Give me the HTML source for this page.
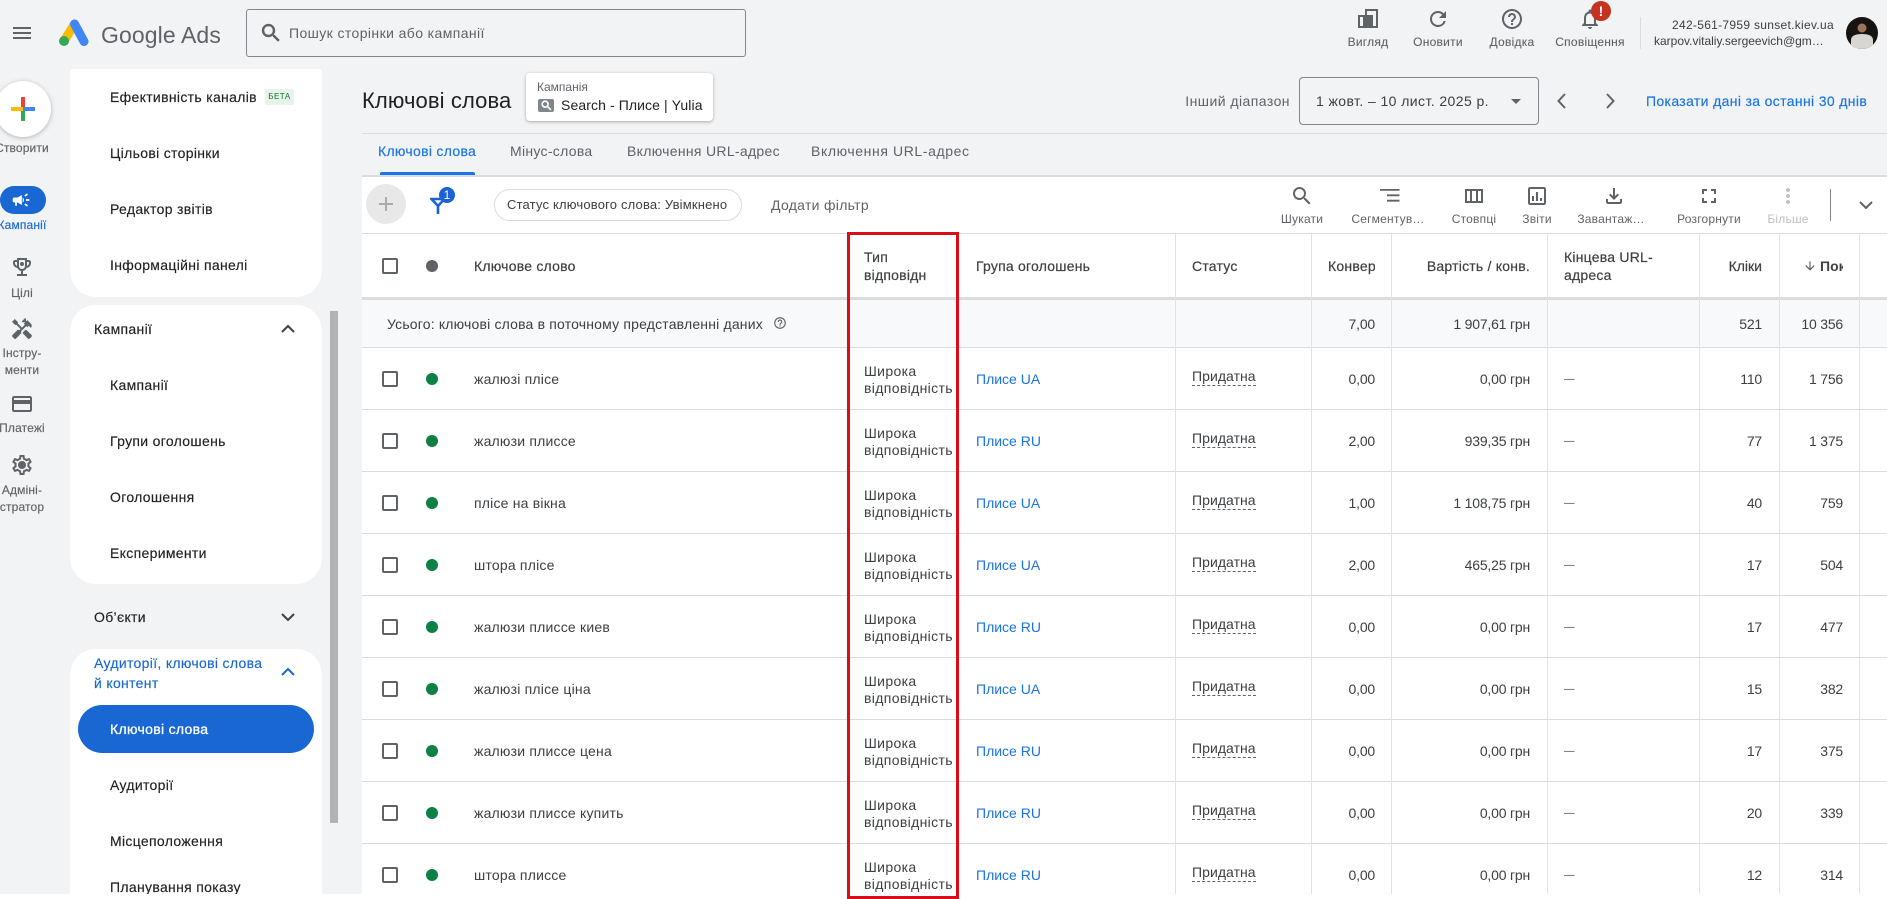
<!DOCTYPE html>
<html lang="uk"><head><meta charset="utf-8"><title>Google Ads</title>
<style>
html,body{margin:0;padding:0}
body{width:1887px;height:899px;overflow:hidden;position:relative;background:#f1f3f4;font:14px/20px "Liberation Sans","Noto Sans CJK JP",sans-serif;color:#3c4043}
.a{position:absolute;white-space:nowrap;line-height:20px}
svg{position:absolute;display:block}
.g{fill:#5f6368}
.s{font-size:14px;letter-spacing:.32px;color:#202124;-webkit-text-stroke:.15px #202124}
.r{font-size:12px;width:60px;left:-8px;text-align:center;line-height:17px;color:#5f6368;white-space:normal;letter-spacing:.15px;-webkit-text-stroke:.15px #5f6368}
.l{font-size:12px;text-align:center;color:#5f6368;transform:translateX(-50%);top:209px;letter-spacing:.2px}
.tl{font-size:12px;text-align:center;color:#5f6368;transform:translateX(-50%);top:32px;letter-spacing:.25px;-webkit-text-stroke:.1px #5f6368}
.tab{top:141px;font-size:14px;color:#5f6368;letter-spacing:.3px}
.row{position:absolute;left:362px;width:1525px;height:61px;background:#fff;border-bottom:1px solid #dadce0}
.row .a{color:#3c4043}
.cb{position:absolute;left:20px;top:23px;width:12px;height:12px;border:2px solid #5f6368;border-radius:2px}
.dot{position:absolute;left:64px;top:25px;width:12px;height:12px;border-radius:50%;background:#0d8043}
.k{left:112px;top:21px;letter-spacing:.2px}
.m{left:502px;top:15px;line-height:17px!important;letter-spacing:.35px}
.ag{left:614px;top:21px;color:#1a73e8!important;letter-spacing:0}
.st{left:830px;top:20px;letter-spacing:.05px;border-bottom:1px dashed #5f6368;line-height:16px!important;padding-bottom:1px}
.n1,.n2,.n3,.n4{top:21px;text-align:right;letter-spacing:-.2px}
.n1{right:512px}.n2{right:357px}.n3{right:125px}.n4{right:44px}
.u{left:1202px;top:21px;font-size:10.5px}
.h{font-size:14px;color:#3c4043;-webkit-text-stroke:.2px #3c4043;letter-spacing:.22px}
.v{position:absolute;top:233px;width:1px;height:661px;background:#e0e2e5}
</style></head>
<body>

<!-- top bar -->
<svg style="left:10px;top:21px" width="24" height="24" viewBox="0 0 24 24"><path class="g" d="M3 18h18v-2H3v2zm0-5h18v-2H3v2zm0-7v2h18V6H3z"/></svg>
<svg style="left:59px;top:19px" width="30" height="27" viewBox="0 0 30 27"><path d="M15.5 5 L5 22" stroke="#fbbc04" stroke-width="9"/><path d="M15.5 5 L25 22.5" stroke="#4285f4" stroke-width="9" stroke-linecap="round"/><circle cx="5" cy="22" r="5" fill="#34a853"/></svg>
<div class="a" style="left:101px;top:23px;font-size:23px;line-height:24px;color:#5f6368;letter-spacing:.1px">Google Ads</div>
<div style="position:absolute;left:246px;top:9px;width:498px;height:46px;border:1px solid #80868b;border-radius:3px"></div>
<svg style="left:259px;top:21px" width="24" height="24" viewBox="0 0 24 24"><path class="g" stroke="#5f6368" stroke-width=".5" d="M15.5 14h-.79l-.28-.27A6.471 6.471 0 0 0 16 9.5 6.5 6.5 0 1 0 9.5 16c1.61 0 3.09-.59 4.23-1.57l.27.28v.79l5 4.99L20.49 19l-4.99-5zm-6 0C7.01 14 5 11.99 5 9.5S7.01 5 9.5 5 14 7.01 14 9.5 11.99 14 9.5 14z"/></svg>
<div class="a" style="left:289px;top:23px;color:#5f6368;font-size:14px;letter-spacing:.4px">Пошук сторінки або кампанії</div>

<!-- top right -->
<svg style="left:1358px;top:9px" width="20" height="19" viewBox="0 0 20 19"><path class="g" d="M7 0h13v19H0V6h7V0zm2 2v15h9V2H9zM2 8v9h3V8H2z"/><rect x="7" y="6" width="8" height="11" fill="#5f6368"/></svg>
<svg style="left:1426px;top:7px" width="24" height="24" viewBox="0 0 24 24"><path class="g" d="M17.65 6.35A7.958 7.958 0 0 0 12 4c-4.42 0-7.99 3.58-7.99 8s3.57 8 7.99 8c3.73 0 6.84-2.55 7.73-6h-2.08A5.99 5.99 0 0 1 12 18c-3.31 0-6-2.69-6-6s2.69-6 6-6c1.66 0 3.14.69 4.22 1.78L13 11h7V4l-2.35 2.35z"/></svg>
<svg style="left:1500px;top:7px" width="24" height="24" viewBox="0 0 24 24"><path class="g" d="M11 18h2v-2h-2v2zm1-16C6.48 2 2 6.48 2 12s4.48 10 10 10 10-4.48 10-10S17.52 2 12 2zm0 18c-4.41 0-8-3.59-8-8s3.59-8 8-8 8 3.59 8 8-3.59 8-8 8zm0-14c-2.21 0-4 1.79-4 4h2c0-1.1.9-2 2-2s2 .9 2 2c0 2-3 1.75-3 5h2c0-2.25 3-2.5 3-5 0-2.21-1.79-4-4-4z"/></svg>
<svg style="left:1578px;top:7px" width="24" height="24" viewBox="0 0 24 24"><path class="g" d="M12 22c1.1 0 2-.9 2-2h-4c0 1.1.9 2 2 2zm6-6v-5c0-3.07-1.63-5.64-4.5-6.32V4c0-.83-.67-1.5-1.5-1.5s-1.5.67-1.5 1.5v.68C7.64 5.36 6 7.92 6 11v5l-2 2v1h16v-1l-2-2zm-2 1H8v-6c0-2.48 1.51-4.5 4-4.5s4 2.02 4 4.5v6z"/></svg>
<div style="position:absolute;left:1591px;top:1px;width:20px;height:20px;border-radius:50%;background:#c5321f"></div>
<div class="a" style="left:1591px;top:1px;width:20px;text-align:center;color:#fff;font-weight:700;font-size:14px">!</div>
<div class="a tl" style="left:1368px">Вигляд</div>
<div class="a tl" style="left:1438px">Оновити</div>
<div class="a tl" style="left:1512px">Довідка</div>
<div class="a tl" style="left:1590px">Сповіщення</div>
<div style="position:absolute;left:1640px;top:17px;width:1px;height:32px;background:#dadce0"></div>
<div class="a" style="right:53px;top:15px;font-size:12px;color:#3c4043;letter-spacing:.3px">242-561-7959 sunset.kiev.ua</div>
<div class="a" style="left:1654px;top:31px;font-size:12px;color:#3c4043;width:175px;overflow:hidden">karpov.vitaliy.sergeevich@gm…</div>
<svg style="left:1846px;top:17px" width="32" height="32" viewBox="0 0 32 32"><defs><clipPath id="c"><circle cx="16" cy="16" r="16"/></clipPath></defs><g clip-path="url(#c)"><rect width="32" height="32" fill="#171310"/><circle cx="16" cy="11" r="4.5" fill="#9c7358"/><path d="M5 32v-9c0-4 4-6 11-6s11 2 11 6v9z" fill="#d8d6d2"/></g></svg>

<!-- left rail -->
<div style="position:absolute;left:-5px;top:81px;width:56px;height:56px;border-radius:50%;background:#fff;box-shadow:0 1px 5px rgba(60,64,67,.35)"></div>
<div style="position:absolute;left:21px;top:97px;width:4px;height:12px;background:#ea4335"></div>
<div style="position:absolute;left:21px;top:109px;width:4px;height:12px;background:#34a853"></div>
<div style="position:absolute;left:11px;top:107px;width:12px;height:4px;background:#fbbc04"></div>
<div style="position:absolute;left:23px;top:107px;width:12px;height:4px;background:#4285f4"></div>
<div class="a r" style="top:140px">Створити</div>
<div style="position:absolute;left:0;top:186px;width:46px;height:28px;border-radius:14px;background:#1967d2"></div>
<svg style="left:11px;top:190px" width="20" height="20" viewBox="0 0 24 24"><path fill="#fff" d="M18 11v2h4v-2h-4zm-2 6.61c.96.71 2.21 1.65 3.2 2.39.4-.53.8-1.07 1.2-1.6-.99-.74-2.24-1.68-3.2-2.4-.4.54-.8 1.08-1.2 1.61zM20.4 5.6c-.4-.53-.8-1.07-1.2-1.6-.99.74-2.24 1.68-3.2 2.4.4.53.8 1.07 1.2 1.6.96-.72 2.21-1.65 3.2-2.4zM4 9c-1.1 0-2 .9-2 2v2c0 1.1.9 2 2 2h1v4h2v-4h1l5 3V6L8 9H4zm11.5 3c0-1.33-.58-2.53-1.5-3.35v6.69c.92-.81 1.5-2.01 1.5-3.34z"/></svg>
<div class="a r" style="top:217px;color:#1967d2;-webkit-text-stroke:.15px #1967d2">Кампанії</div>
<svg style="left:10px;top:255px" width="24" height="24" viewBox="0 0 24 24"><path class="g" d="M19 5h-2V3H7v2H5c-1.1 0-2 .9-2 2v1c0 2.55 1.92 4.63 4.39 4.94.63 1.5 1.98 2.63 3.61 2.96V19H7v2h10v-2h-4v-3.1c1.63-.33 2.98-1.46 3.61-2.96C19.08 12.63 21 10.55 21 8V7c0-1.1-.9-2-2-2zM5 8V7h2v3.82C5.84 10.4 5 9.3 5 8zm7 6c-1.65 0-3-1.35-3-3V5h6v6c0 1.65-1.35 3-3 3zm7-6c0 1.3-.84 2.4-2 2.82V7h2v1z"/><circle class="g" cx="12" cy="9" r="2"/></svg>
<div class="a r" style="top:285px">Цілі</div>
<svg style="left:10px;top:317px" width="24" height="24" viewBox="0 0 24 24"><path class="g" d="M21.67 18.17l-5.3-5.3h-.99l-2.54 2.54v.99l5.3 5.3c.39.39 1.02.39 1.41 0l2.12-2.12c.39-.38.39-1.02 0-1.41z"/><path class="g" d="M17.34 10.19l1.41-1.41 2.12 2.12c1.17-1.17 1.17-3.07 0-4.24l-3.54-3.54-1.41 1.41V1.71l-.7-.71-3.54 3.54.71.71h2.83l-1.41 1.41 1.06 1.06-2.89 2.89-4.13-4.13V5.06L4.83 2.04 2 4.87 5.03 7.9h1.41l4.13 4.13-.85.85H7.61l-5.3 5.3c-.39.39-.39 1.02 0 1.41l2.12 2.12c.39.39 1.02.39 1.41 0l5.3-5.3v-2.12l5.15-5.15 1.05 1.05z"/></svg>
<div class="a r" style="top:345px">Інстру-<br>менти</div>
<svg style="left:10px;top:392px" width="24" height="24" viewBox="0 0 24 24"><path class="g" d="M20 4H4c-1.11 0-1.99.89-1.99 2L2 18c0 1.11.89 2 2 2h16c1.11 0 2-.89 2-2V6c0-1.11-.89-2-2-2zm0 14H4v-6h16v6zm0-10H4V6h16v2z"/></svg>
<div class="a r" style="top:420px">Платежі</div>
<svg style="left:10px;top:453px" width="24" height="24" viewBox="0 0 24 24"><path class="g" d="M19.43 12.98c.04-.32.07-.64.07-.98 0-.34-.03-.66-.07-.98l2.11-1.65c.19-.15.24-.42.12-.64l-2-3.46c-.09-.16-.26-.25-.44-.25-.06 0-.12.01-.17.03l-2.49 1c-.52-.4-1.08-.73-1.69-.98l-.38-2.65C14.46 2.18 14.25 2 14 2h-4c-.25 0-.46.18-.49.42l-.38 2.65c-.61.25-1.17.59-1.69.98l-2.49-1c-.06-.02-.12-.03-.18-.03-.17 0-.34.09-.43.25l-2 3.46c-.13.22-.07.49.12.64l2.11 1.65c-.04.32-.07.65-.07.98 0 .33.03.66.07.98l-2.11 1.65c-.19.15-.24.42-.12.64l2 3.46c.09.16.26.25.44.25.06 0 .12-.01.17-.03l2.49-1c.52.4 1.08.73 1.69.98l.38 2.65c.03.24.24.42.49.42h4c.25 0 .46-.18.49-.42l.38-2.65c.61-.25 1.17-.59 1.69-.98l2.49 1c.06.02.12.03.18.03.17 0 .34-.09.43-.25l2-3.46c.12-.22.07-.49-.12-.64l-2.11-1.65zm-1.98-1.71c.04.31.05.52.05.73 0 .21-.02.43-.05.73l-.14 1.13.89.7 1.08.84-.7 1.21-1.27-.51-1.04-.42-.9.68c-.43.32-.84.56-1.25.73l-1.06.43-.16 1.13-.2 1.35h-1.4l-.19-1.35-.16-1.13-1.06-.43c-.43-.18-.83-.41-1.23-.71l-.91-.7-1.06.43-1.27.51-.7-1.21 1.08-.84.89-.7-.14-1.13c-.03-.31-.05-.54-.05-.74s.02-.43.05-.73l.14-1.13-.89-.7-1.08-.84.7-1.21 1.27.51 1.04.42.9-.68c.43-.32.84-.56 1.25-.73l1.06-.43.16-1.13.2-1.35h1.39l.19 1.35.16 1.13 1.06.43c.43.18.83.41 1.23.71l.91.7 1.06-.43 1.27-.51.7 1.21-1.07.85-.89.7.14 1.13z"/><circle class="g" cx="12" cy="12" r="4"/></svg>
<div class="a r" style="top:482px">Адміні-<br>стратор</div>

<!-- nav panels -->
<div style="position:absolute;left:70px;top:69px;width:252px;height:228px;background:#fff;border-radius:0 0 26px 26px"></div>
<div style="position:absolute;left:70px;top:305px;width:252px;height:279px;background:#fff;border-radius:26px"></div>
<div style="position:absolute;left:70px;top:649px;width:252px;height:250px;background:#fff;border-radius:26px 26px 0 0"></div>
<div style="position:absolute;left:330px;top:311px;width:8px;height:512px;background:#b2b2b2"></div>
<div class="a s" style="left:110px;top:87px">Ефективність каналів</div>
<div class="a" style="left:265px;top:89px;width:29px;height:16px;line-height:16px;background:#e6f4ea;border-radius:2px;font-size:8px;text-align:center;color:#137333;letter-spacing:.5px">БЕТА</div>
<div class="a s" style="left:110px;top:143px">Цільові сторінки</div>
<div class="a s" style="left:110px;top:199px">Редактор звітів</div>
<div class="a s" style="left:110px;top:255px">Інформаційні панелі</div>
<div class="a s" style="left:94px;top:319px">Кампанії</div>
<div class="a s" style="left:110px;top:375px">Кампанії</div>
<div class="a s" style="left:110px;top:431px">Групи оголошень</div>
<div class="a s" style="left:110px;top:487px">Оголошення</div>
<div class="a s" style="left:110px;top:543px">Експерименти</div>
<div class="a s" style="left:94px;top:607px">Об’єкти</div>
<div class="a s" style="left:94px;top:653px;color:#1967d2;-webkit-text-stroke:.15px #1967d2">Аудиторії, ключові слова</div>
<div class="a s" style="left:94px;top:673px;color:#1967d2;-webkit-text-stroke:.15px #1967d2">й контент</div>
<div style="position:absolute;left:78px;top:705px;width:236px;height:48px;border-radius:24px;background:#1967d2"></div>
<div class="a s" style="left:110px;top:719px;color:#fff;-webkit-text-stroke:.3px #fff">Ключові слова</div>
<div class="a s" style="left:110px;top:775px">Аудиторії</div>
<div class="a s" style="left:110px;top:831px">Місцеположення</div>
<div class="a s" style="left:110px;top:877px">Планування показу</div>
<svg style="left:276px;top:317px" width="24" height="24" viewBox="0 0 24 24"><path fill="none" stroke="#3c4043" stroke-width="2" d="M6 15l6-6 6 6"/></svg>
<svg style="left:276px;top:605px" width="24" height="24" viewBox="0 0 24 24"><path fill="none" stroke="#3c4043" stroke-width="2" d="M6 9l6 6 6-6"/></svg>
<svg style="left:276px;top:660px" width="24" height="24" viewBox="0 0 24 24"><path fill="none" stroke="#1967d2" stroke-width="2" d="M6 15l6-6 6 6"/></svg>

<!-- header -->
<div class="a" style="left:362px;top:88px;font-size:22px;line-height:26px;color:#202124;letter-spacing:.1px">Ключові слова</div>
<div style="position:absolute;left:526px;top:73px;width:187px;height:48px;background:#fff;border-radius:4px;box-shadow:0 1px 3px rgba(60,64,67,.4)"></div>
<div class="a" style="left:537px;top:77px;font-size:12px;color:#5f6368">Кампанія</div>
<div style="position:absolute;left:538px;top:99px;width:16px;height:13px;background:#80868b;border-radius:2px"></div>
<svg style="left:540px;top:99px" width="13" height="13" viewBox="0 0 24 24"><path fill="#fff" stroke="#fff" d="M15.5 14h-.79l-.28-.27A6.471 6.471 0 0 0 16 9.5 6.5 6.5 0 1 0 9.5 16c1.61 0 3.09-.59 4.23-1.57l.27.28v.79l5 4.99L20.49 19l-4.99-5zm-6 0C7.01 14 5 11.99 5 9.5S7.01 5 9.5 5 14 7.01 14 9.5 11.99 14 9.5 14z"/></svg>
<div class="a" style="left:561px;top:95px;font-size:14px;color:#202124;letter-spacing:.1px">Search - Плисе | Yulia</div>

<div class="a" style="right:597px;top:91px;font-size:14px;color:#5f6368;letter-spacing:.45px">Інший діапазон</div>
<div style="position:absolute;left:1299px;top:77px;width:238px;height:46px;border:1px solid #80868b;border-radius:4px"></div>
<div class="a" style="left:1316px;top:91px;font-size:14px;color:#3c4043;letter-spacing:.42px">1 жовт. – 10 лист. 2025 р.</div>
<div style="position:absolute;left:1511px;top:99px;width:0;height:0;border:5px solid transparent;border-top-color:#5f6368;border-bottom:0"></div>
<svg style="left:1550px;top:89px" width="24" height="24" viewBox="0 0 24 24"><path fill="none" stroke="#5f6368" stroke-width="2" d="M15 5l-6.5 7 6.5 7"/></svg>
<svg style="left:1598px;top:89px" width="24" height="24" viewBox="0 0 24 24"><path fill="none" stroke="#5f6368" stroke-width="2" d="M9 5l6.5 7-6.5 7"/></svg>
<div class="a" style="left:1646px;top:91px;font-size:14px;color:#1a73e8;-webkit-text-stroke:.15px #1a73e8;letter-spacing:.35px">Показати дані за останні 30 днів</div>
<div style="position:absolute;left:362px;top:133px;width:1525px;height:1px;background:#dadce0"></div>

<!-- tabs -->
<div class="a tab" style="left:378px;color:#1a73e8;-webkit-text-stroke:.15px #1a73e8">Ключові слова</div>
<div class="a tab" style="left:510px">Мінус-слова</div>
<div class="a tab" style="left:627px">Включення URL-адрес</div>
<div class="a tab" style="left:811px;letter-spacing:.6px">Включення URL-адрес</div>
<div style="position:absolute;left:380px;top:172px;width:95px;height:3px;background:#1a73e8;border-radius:2px 2px 0 0"></div>
<div style="position:absolute;left:362px;top:175px;width:1525px;height:2px;background:#dadce0"></div>

<!-- toolbar -->
<div style="position:absolute;left:362px;top:177px;width:1525px;background:#fff;border-bottom:1px solid #dadce0;box-sizing:border-box;height:57px"></div>
<div style="position:absolute;left:366px;top:184px;width:40px;height:40px;border-radius:50%;background:#e8e8e8"></div>
<svg style="left:374px;top:192px" width="24" height="24" viewBox="0 0 24 24"><path fill="#aaa" d="M19 13h-6v6h-2v-6H5v-2h6V5h2v6h6z"/></svg>
<svg style="left:430px;top:197px" width="16" height="17" viewBox="0 0 16 17"><path fill="none" stroke="#1a62d6" stroke-width="2.6" d="M1.5 2h13L8 9zM8 9v8"/></svg>
<div style="position:absolute;left:439px;top:187px;width:16px;height:16px;border-radius:50%;background:#1a62d6"></div>
<div class="a" style="left:439px;top:187px;width:16px;line-height:16px;text-align:center;color:#fff;font-size:12px">1</div>
<div style="position:absolute;left:494px;top:189px;width:246px;height:30px;border:1px solid #dadce0;border-radius:16px"></div>
<div class="a" style="left:507px;top:195px;font-size:13px;color:#3c4043;letter-spacing:.18px">Статус ключового слова: Увімкнено</div>
<div class="a" style="left:771px;top:195px;font-size:14px;color:#5f6368;letter-spacing:.3px">Додати фільтр</div>

<svg style="left:1290px;top:184px" width="24" height="24" viewBox="0 0 24 24"><path class="g" d="M15.5 14h-.79l-.28-.27A6.471 6.471 0 0 0 16 9.5 6.5 6.5 0 1 0 9.5 16c1.61 0 3.09-.59 4.23-1.57l.27.28v.79l5 4.99L20.49 19l-4.99-5zm-6 0C7.01 14 5 11.99 5 9.5S7.01 5 9.5 5 14 7.01 14 9.5 11.99 14 9.5 14z"/></svg>
<svg style="left:1378px;top:184px" width="24" height="24" viewBox="0 0 24 24"><path class="g" d="M2 5h19.5v1.8H2zM9 10.4h12.5v1.8H9zM9 15.8h12.5v1.8H9z"/></svg>
<svg style="left:1462px;top:184px" width="24" height="24" viewBox="0 0 24 24"><path class="g" d="M3 5h18v14H3V5zm2 2v10h3V7H5zm5 0v10h4V7h-4zm6 0v10h3V7h-3z"/></svg>
<svg style="left:1525px;top:184px" width="24" height="24" viewBox="0 0 24 24"><path class="g" d="M19 3H5c-1.1 0-2 .9-2 2v14c0 1.1.9 2 2 2h14c1.1 0 2-.9 2-2V5c0-1.1-.9-2-2-2zm0 16H5V5h14v14zM7 12h2v5H7zm4-4h2v9h-2zm4 6h2v3h-2z"/></svg>
<svg style="left:1602px;top:184px" width="24" height="24" viewBox="0 0 24 24"><path class="g" d="M18 15v3H6v-3H4v3c0 1.1.9 2 2 2h12c1.1 0 2-.9 2-2v-3h-2zm-1-4l-1.41-1.41L13 12.17V4h-2v8.17L8.41 9.59 7 11l5 5 5-5z"/></svg>
<svg style="left:1697px;top:184px" width="24" height="24" viewBox="0 0 24 24"><path class="g" d="M7 14H5v5h5v-2H7v-3zm-2-4h2V7h3V5H5v5zm12 7h-3v2h5v-5h-2v3zM14 5v2h3v3h2V5h-5z"/></svg>
<svg style="left:1776px;top:184px" width="24" height="24" viewBox="0 0 24 24"><path fill="#bdc1c6" d="M12 8c1.1 0 2-.9 2-2s-.9-2-2-2-2 .9-2 2 .9 2 2 2zm0 2c-1.1 0-2 .9-2 2s.9 2 2 2 2-.9 2-2-.9-2-2-2zm0 6c-1.1 0-2 .9-2 2s.9 2 2 2 2-.9 2-2-.9-2-2-2z"/></svg>
<div class="a l" style="left:1302px">Шукати</div>
<div class="a l" style="left:1388px">Сегментув…</div>
<div class="a l" style="left:1474px">Стовпці</div>
<div class="a l" style="left:1537px">Звіти</div>
<div class="a l" style="left:1611px">Завантаж…</div>
<div class="a l" style="left:1709px">Розгорнути</div>
<div class="a l" style="left:1788px;color:#bdc1c6">Більше</div>
<div style="position:absolute;left:1830px;top:189px;width:1px;height:32px;background:#80868b"></div>
<svg style="left:1854px;top:193px" width="24" height="24" viewBox="0 0 24 24"><path fill="none" stroke="#5f6368" stroke-width="2" d="M6 9l6 6 6-6"/></svg>

<!-- table header -->
<div style="position:absolute;left:362px;top:234px;width:1525px;height:63px;background:#fff"></div>
<div style="position:absolute;left:382px;top:258px;width:12px;height:12px;border:2px solid #5f6368;border-radius:2px"></div>
<div style="position:absolute;left:426px;top:260px;width:12px;height:12px;border-radius:50%;background:#5f6368"></div>
<div class="a h" style="left:474px;top:256px">Ключове слово</div>
<div class="a h" style="left:864px;top:248px;line-height:18px;width:63px;overflow:hidden">Тип<br>відповідності</div>
<div class="a h" style="left:976px;top:256px">Група оголошень</div>
<div class="a h" style="left:1192px;top:256px">Статус</div>
<div class="a h" style="left:1328px;top:256px;width:47px;overflow:hidden">Конверсії</div>
<div class="a h" style="right:357px;top:256px">Вартість / конв.</div>
<div class="a h" style="left:1564px;top:248px;line-height:18px">Кінцева URL-<br>адреса</div>
<div class="a h" style="right:125px;top:256px;letter-spacing:0">Кліки</div>
<svg style="left:1803px;top:259px" width="14" height="14" viewBox="0 0 24 24"><path fill="#5f6368" d="M20 12l-1.41-1.41L13 16.17V4h-2v12.17l-5.58-5.59L4 12l8 8 8-8z"/></svg>
<div class="a h" style="left:1820px;top:256px;width:23px;overflow:hidden;font-weight:700;-webkit-text-stroke:0;letter-spacing:0">Покази</div>
<div style="position:absolute;left:362px;top:297px;width:1525px;height:3px;background:#dadce0"></div>

<!-- totals -->
<div style="position:absolute;left:362px;top:300px;width:1525px;height:48px;background:#f8f9fa;border-bottom:1px solid #dadce0;box-sizing:border-box"></div>
<div class="a" style="left:387px;top:314px;letter-spacing:.18px">Усього: ключові слова в поточному представленні даних</div>
<svg style="left:773px;top:316px" width="14" height="14" viewBox="0 0 24 24"><path class="g" d="M11 18h2v-2h-2v2zm1-16C6.48 2 2 6.48 2 12s4.48 10 10 10 10-4.48 10-10S17.52 2 12 2zm0 18c-4.41 0-8-3.59-8-8s3.59-8 8-8 8 3.59 8 8-3.59 8-8 8zm0-14c-2.21 0-4 1.79-4 4h2c0-1.1.9-2 2-2s2 .9 2 2c0 2-3 1.75-3 5h2c0-2.25 3-2.5 3-5 0-2.21-1.79-4-4-4z"/></svg>
<div class="a" style="right:512px;top:314px;letter-spacing:-.2px">7,00</div>
<div class="a" style="right:357px;top:314px;letter-spacing:-.2px">1 907,61 грн</div>
<div class="a" style="right:125px;top:314px;letter-spacing:-.2px">521</div>
<div class="a" style="right:44px;top:314px;letter-spacing:-.2px">10 356</div>

<!-- rows -->
<div class="row" style="top:348px"><i class="cb"></i><i class="dot"></i><div class="a k">жалюзі плісе</div><div class="a m">Широка<br>відповідність</div><div class="a ag">Плисе UA</div><div class="a st">Придатна</div><div class="a n1">0,00</div><div class="a n2">0,00 грн</div><div class="a u">—</div><div class="a n3">110</div><div class="a n4">1 756</div></div>
<div class="row" style="top:410px"><i class="cb"></i><i class="dot"></i><div class="a k">жалюзи плиссе</div><div class="a m">Широка<br>відповідність</div><div class="a ag">Плисе RU</div><div class="a st">Придатна</div><div class="a n1">2,00</div><div class="a n2">939,35 грн</div><div class="a u">—</div><div class="a n3">77</div><div class="a n4">1 375</div></div>
<div class="row" style="top:472px"><i class="cb"></i><i class="dot"></i><div class="a k">плісе на вікна</div><div class="a m">Широка<br>відповідність</div><div class="a ag">Плисе UA</div><div class="a st">Придатна</div><div class="a n1">1,00</div><div class="a n2">1 108,75 грн</div><div class="a u">—</div><div class="a n3">40</div><div class="a n4">759</div></div>
<div class="row" style="top:534px"><i class="cb"></i><i class="dot"></i><div class="a k">штора плісе</div><div class="a m">Широка<br>відповідність</div><div class="a ag">Плисе UA</div><div class="a st">Придатна</div><div class="a n1">2,00</div><div class="a n2">465,25 грн</div><div class="a u">—</div><div class="a n3">17</div><div class="a n4">504</div></div>
<div class="row" style="top:596px"><i class="cb"></i><i class="dot"></i><div class="a k">жалюзи плиссе киев</div><div class="a m">Широка<br>відповідність</div><div class="a ag">Плисе RU</div><div class="a st">Придатна</div><div class="a n1">0,00</div><div class="a n2">0,00 грн</div><div class="a u">—</div><div class="a n3">17</div><div class="a n4">477</div></div>
<div class="row" style="top:658px"><i class="cb"></i><i class="dot"></i><div class="a k">жалюзі плісе ціна</div><div class="a m">Широка<br>відповідність</div><div class="a ag">Плисе UA</div><div class="a st">Придатна</div><div class="a n1">0,00</div><div class="a n2">0,00 грн</div><div class="a u">—</div><div class="a n3">15</div><div class="a n4">382</div></div>
<div class="row" style="top:720px"><i class="cb"></i><i class="dot"></i><div class="a k">жалюзи плиссе цена</div><div class="a m">Широка<br>відповідність</div><div class="a ag">Плисе RU</div><div class="a st">Придатна</div><div class="a n1">0,00</div><div class="a n2">0,00 грн</div><div class="a u">—</div><div class="a n3">17</div><div class="a n4">375</div></div>
<div class="row" style="top:782px"><i class="cb"></i><i class="dot"></i><div class="a k">жалюзи плиссе купить</div><div class="a m">Широка<br>відповідність</div><div class="a ag">Плисе RU</div><div class="a st">Придатна</div><div class="a n1">0,00</div><div class="a n2">0,00 грн</div><div class="a u">—</div><div class="a n3">20</div><div class="a n4">339</div></div>
<div class="row" style="top:844px;border-bottom:0;height:50px"><i class="cb"></i><i class="dot"></i><div class="a k">штора плиссе</div><div class="a m">Широка<br>відповідність</div><div class="a ag">Плисе RU</div><div class="a st">Придатна</div><div class="a n1">0,00</div><div class="a n2">0,00 грн</div><div class="a u">—</div><div class="a n3">12</div><div class="a n4">314</div></div>
<div style="position:absolute;left:0;top:894px;width:1887px;height:5px;background:#fff"></div>

<!-- column lines -->
<div class="v" style="left:1175px"></div>
<div class="v" style="left:1311px"></div>
<div class="v" style="left:1391px"></div>
<div class="v" style="left:1547px"></div>
<div class="v" style="left:1699px"></div>
<div class="v" style="left:1779px"></div>
<div class="v" style="left:1859px"></div>

<!-- red highlight -->
<div style="position:absolute;left:847px;top:232px;width:106px;height:661px;border:3px solid #d90c1a"></div>

</body></html>
